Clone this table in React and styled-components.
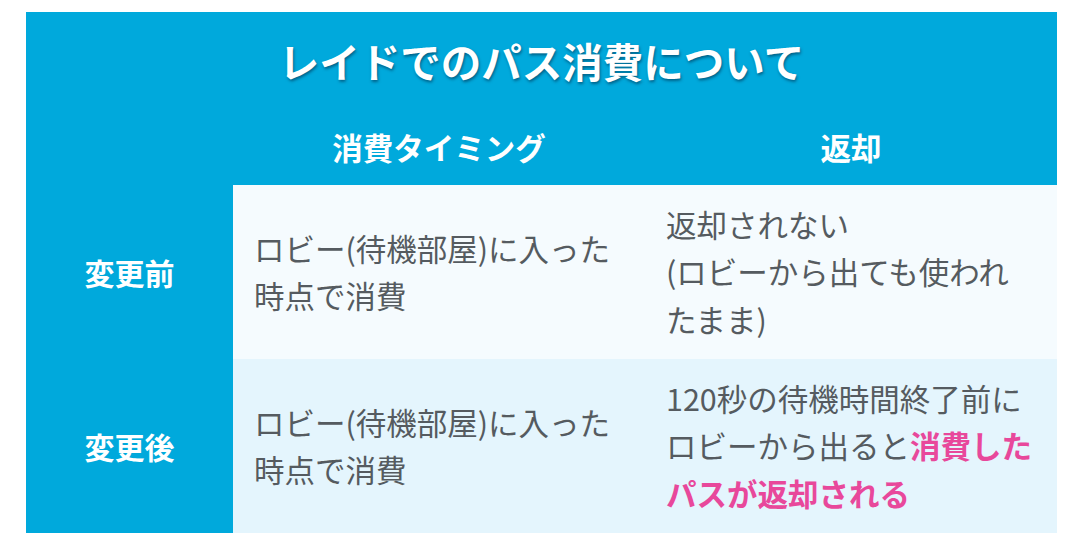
import styled, { createGlobalStyle } from "styled-components";

const GlobalStyle = createGlobalStyle`
  html, body {
    margin: 0;
    padding: 0;
    background: #ffffff;
  }
  body {
    font-family: "Noto Sans CJK JP", "Noto Sans", sans-serif;
  }
`;

const Page = styled.div`
  width: 1080px;
  height: 558px;
  padding: 12px 0 0 26px;
  box-sizing: border-box;
`;

const Table = styled.table`
  width: 1031px;
  border-collapse: collapse;
  table-layout: fixed;
  background: #00a9dc;
`;

const Title = styled.th`
  height: 96px;
  padding: 0;
  color: #ffffff;
  font-size: 40.5px;
  font-weight: 700;
  text-align: center;
  vertical-align: middle;
  text-shadow: 1px 2px 3px rgba(0, 40, 70, 0.55);
`;

const HeadCell = styled.th`
  height: 77px;
  padding: 0;
  color: #ffffff;
  font-size: 30.5px;
  font-weight: 700;
  text-align: center;
  vertical-align: middle;
`;

const RowHead = styled.th`
  height: 174px;
  padding: 0;
  color: #ffffff;
  font-size: 30px;
  font-weight: 700;
  text-align: center;
  vertical-align: middle;
`;

const Cell = styled.td`
  padding: 0 10px 0 21px;
  background: ${(p) => (p.$alt ? "#e4f5fd" : "#f5fbfe")};
  color: #555b60;
  font-size: 30.5px;
  line-height: 47.5px;
  text-align: left;
  vertical-align: middle;
  white-space: nowrap;
`;

const Pink = styled.span`
  color: #e8489b;
  font-weight: 700;
`;

const rows = [
  {
    label: "変更前",
    timing: ["ロビー(待機部屋)に入った", "時点で消費"],
    refund: (
      <>
        返却されない
        <br />
        (ロビーから出ても使われ
        <br />
        たまま)
      </>
    ),
  },
  {
    label: "変更後",
    timing: ["ロビー(待機部屋)に入った", "時点で消費"],
    refund: (
      <>
        120秒の待機時間終了前に
        <br />
        ロビーから出ると<Pink>消費した</Pink>
        <br />
        <Pink>パスが返却される</Pink>
      </>
    ),
  },
];

export default function App() {
  return (
    <>
      <GlobalStyle />
      <Page>
        <Table>
          <colgroup>
            <col style={{ width: "207px" }} />
            <col style={{ width: "412px" }} />
            <col style={{ width: "412px" }} />
          </colgroup>
          <thead>
            <tr>
              <Title colSpan={3}>レイドでのパス消費について</Title>
            </tr>
            <tr>
              <HeadCell />
              <HeadCell>消費タイミング</HeadCell>
              <HeadCell>返却</HeadCell>
            </tr>
          </thead>
          <tbody>
            {rows.map((row, i) => (
              <tr key={row.label}>
                <RowHead>{row.label}</RowHead>
                <Cell $alt={i === 1}>
                  {row.timing[0]}
                  <br />
                  {row.timing[1]}
                </Cell>
                <Cell $alt={i === 1}>{row.refund}</Cell>
              </tr>
            ))}
          </tbody>
        </Table>
      </Page>
    </>
  );
}
